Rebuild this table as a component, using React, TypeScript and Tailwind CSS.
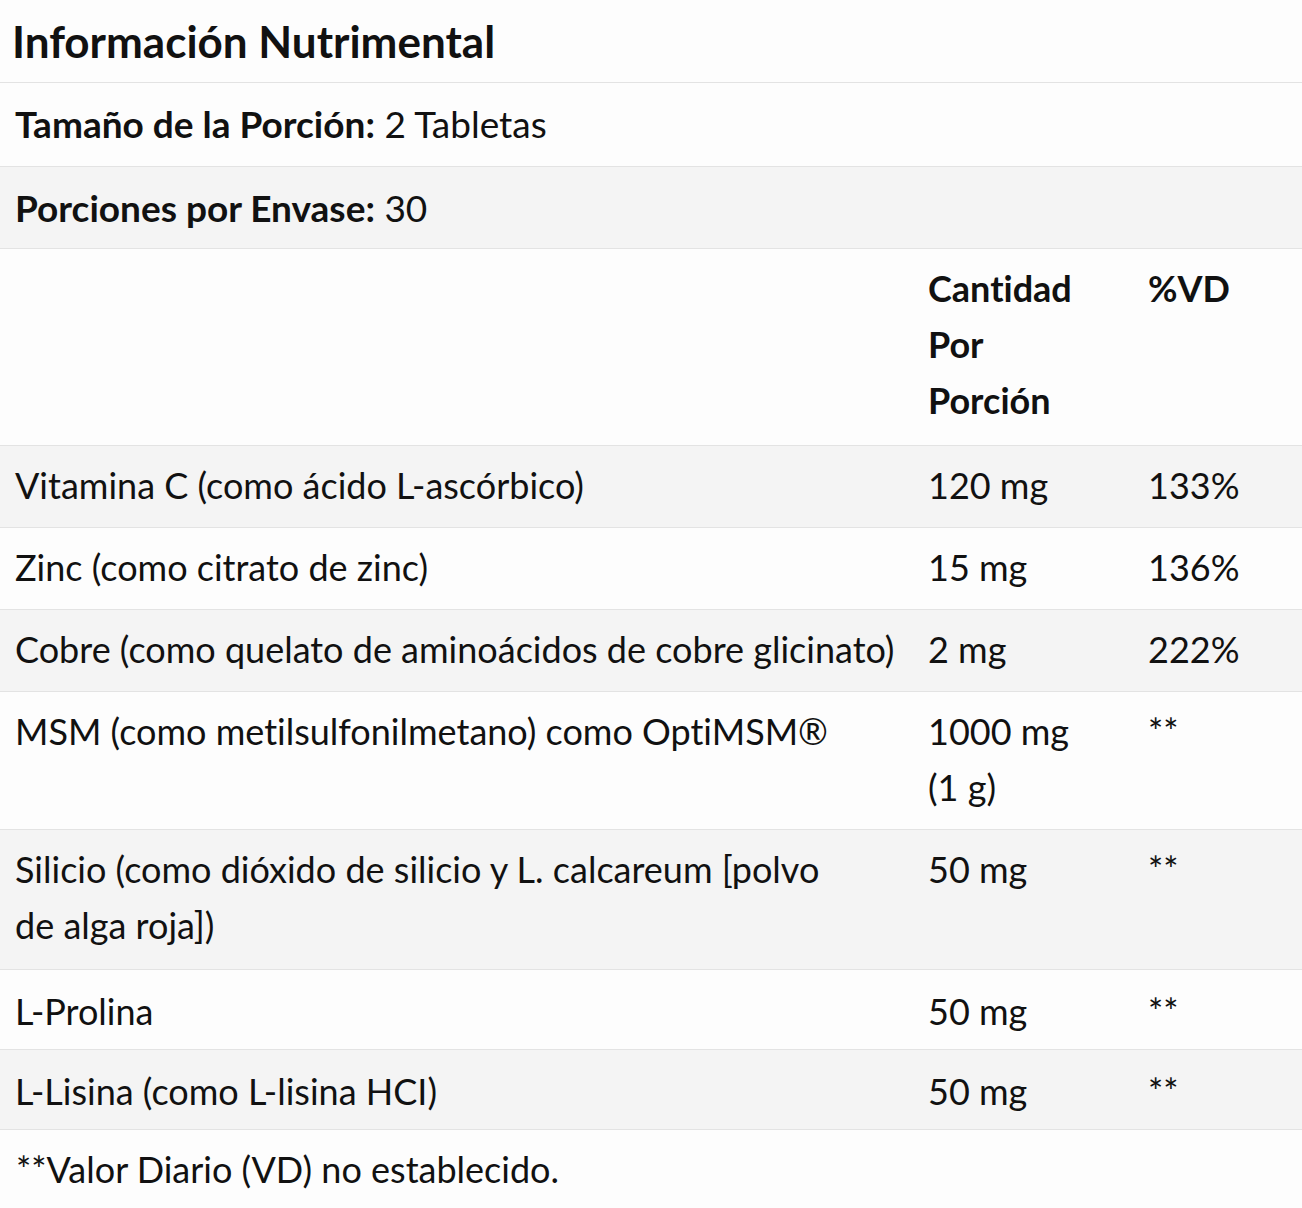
import type { ReactNode } from "react"

type Nutrient = {
  name: ReactNode
  amount: string
  dv: string
  gray: boolean
  pad: string
}

const nutrients: Nutrient[] = [
  { name: "Vitamina C (como ácido L-ascórbico)", amount: "120 mg", dv: "133%", gray: true, pad: "pt-[11px] pb-[14px]" },
  { name: "Zinc (como citrato de zinc)", amount: "15 mg", dv: "136%", gray: false, pad: "pt-[11px] pb-[14px]" },
  {
    name: "Cobre (como quelato de aminoácidos de cobre glicinato)",
    amount: "2 mg",
    dv: "222%",
    gray: true,
    pad: "pt-[11px] pb-[14px]",
  },
  {
    name: "MSM (como metilsulfonilmetano) como OptiMSM®",
    amount: "1000 mg (1\u00a0g)",
    dv: "**",
    gray: false,
    pad: "pt-[11px] pb-[14px]",
  },
  {
    name: (
      <>
        Silicio (como dióxido de silicio y L. calcareum [polvo
        <br />
        de alga roja])
      </>
    ),
    amount: "50 mg",
    dv: "**",
    gray: true,
    pad: "pt-[11px] pb-[16px]",
  },
  { name: "L-Prolina", amount: "50 mg", dv: "**", gray: false, pad: "pt-[13px] pb-[10px]" },
  { name: "L-Lisina (como L-lisina HCI)", amount: "50 mg", dv: "**", gray: true, pad: "pt-[13px] pb-[10px]" },
]

function InfoRow({ label, value, gray, pad }: { label: string; value: string; gray?: boolean; pad: string }) {
  return (
    <div className={`border-b border-[#e3e3e3] px-[15px] text-[37px] ${pad} ${gray ? "bg-[#f4f4f4]" : ""}`}>
      <span className="font-bold">{label}</span> {value}
    </div>
  )
}

export default function App() {
  return (
    <div className="w-[1302px] min-h-[1208px] bg-[#fdfdfd] font-['Lato',sans-serif] text-[36px] leading-[56px] text-[#111] [font-variant-ligatures:none]">
      {/* Title */}
      <div className="border-b border-[#e3e3e3] px-[12px] pt-[13px] pb-[13px]">
        <h1 className="text-[44px] font-bold leading-[56px]">Información Nutrimental</h1>
      </div>

      <InfoRow label="Tamaño de la Porción:" value="2 Tabletas" pad="pt-[13px] pb-[14px]" />
      <InfoRow label="Porciones por Envase:" value="30" gray pad="pt-[13px] pb-[12px]" />

      {/* Column headers */}
      <div className="grid grid-cols-[913px_220px_1fr] border-b border-[#e3e3e3] pt-[11px] pb-[17px] font-bold">
        <div />
        <div className="pl-[15px] pr-[40px]">Cantidad Por Porción</div>
        <div className="pl-[15px]">%VD</div>
      </div>

      {nutrients.map((n, i) => (
        <div
          key={i}
          className={`grid grid-cols-[913px_220px_1fr] border-b border-[#e3e3e3] ${n.pad} ${
            n.gray ? "bg-[#f4f4f4]" : ""
          }`}
        >
          <div className="pl-[15px]">{n.name}</div>
          <div className="pl-[15px] pr-[40px]">{n.amount}</div>
          <div className="pl-[15px]">{n.dv}</div>
        </div>
      ))}

      <div className="px-[16px] pt-[11px]">**Valor Diario (VD) no establecido.</div>
    </div>
  )
}
